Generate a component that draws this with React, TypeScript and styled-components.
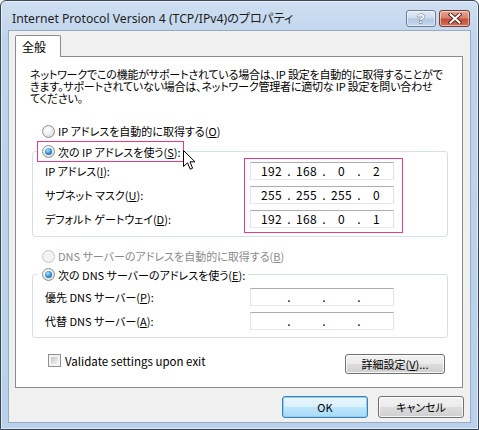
import React from 'react';
import styled, { createGlobalStyle } from 'styled-components';

const GlobalStyle = createGlobalStyle`
  html, body { margin: 0; padding: 0; background: #ffffff; }
  body { width: 479px; height: 430px; overflow: hidden; }
  * { box-sizing: border-box; }
`;

const UI_FONT = `"Noto Sans CJK JP", "Noto Sans", sans-serif`;

const Window = styled.div`
  position: relative;
  width: 479px;
  height: 430px;
  border: 1px solid #3b4654;
  border-radius: 6px 6px 0 0;
  background: linear-gradient(to bottom, #cfdff1 0px, #bed4ec 40px, #b9d1ea 100%);
  box-shadow: inset 0 0 0 1px rgba(255, 255, 255, 0.55);
  display: flex;
  flex-direction: column;
  font-family: ${UI_FONT};
  font-size: 11px;
  color: #000;
  font-feature-settings: "palt";
`;

const TitleBar = styled.div`
  height: 29px;
  display: flex;
  align-items: flex-start;
  padding: 9px 8px 0 11px;
`;

const TitleText = styled.div`
  flex: 1;
  font-family: "Noto Sans", "Noto Sans CJK JP", sans-serif;
  font-size: 12.2px;
  line-height: 18px;
  color: #1e1e1e;
  white-space: nowrap;
`;

const CaptionButtons = styled.div`
  display: flex;
  gap: 3px;
`;

const CaptionButton = styled.div<{ $close?: boolean }>`
  width: ${p => (p.$close ? 31 : 30)}px;
  height: 17px;
  border-radius: 3px;
  border: 1px solid ${p => (p.$close ? '#7a3a30' : '#6c7f97')};
  background: ${p =>
    p.$close
      ? 'linear-gradient(to bottom, #e8a493 0%, #d88373 45%, #c34f3a 55%, #d2705a 100%)'
      : 'linear-gradient(to bottom, #e3ecf6 0%, #cddcee 45%, #b3c8e2 55%, #c6d8ee 100%)'};
  box-shadow: inset 0 0 0 1px rgba(255, 255, 255, 0.5);
  display: flex;
  align-items: center;
  justify-content: center;
`;

const Client = styled.div`
  flex: 1;
  margin: 0 7px 6px 7px;
  background: #f0f0f0;
  border: 1px solid #97abc3;
  display: flex;
  flex-direction: column;
  padding: 4px 7px 0 6px;
`;

const TabStrip = styled.div`
  display: flex;
  position: relative;
  z-index: 1;
  margin-bottom: -1px;
`;

const Tab = styled.div`
  width: 46px;
  height: 22px;
  background: #ffffff;
  border: 1px solid #898c95;
  border-bottom: none;
  border-radius: 2px 2px 0 0;
  padding-left: 6px;
  font-size: 12px;
  line-height: 21px;
`;

const Panel = styled.div`
  height: 332px;
  background: #ffffff;
  border: 1px solid #898c95;
  display: flex;
  flex-direction: column;
`;

const Intro = styled.p`
  margin: 11px 10px 0 14px;
  line-height: 12px;
  font-size: 11px;
  white-space: nowrap;
  letter-spacing: -0.2px;
`;

const RadioRow = styled.div<{ $disabled?: boolean; $top: number }>`
  display: flex;
  align-items: center;
  gap: 3px;
  height: 16px;
  margin-top: ${p => p.$top}px;
  padding-left: 26px;
  color: ${p => (p.$disabled ? '#8a8a8a' : '#000')};
  white-space: nowrap;
`;

const Radio = styled.span<{ $checked?: boolean; $disabled?: boolean }>`
  position: relative;
  width: 13px;
  height: 13px;
  flex: none;
  border-radius: 50%;
  border: 1px solid ${p => (p.$disabled ? '#c4c4c4' : '#8e8f8f')};
  background: ${p =>
    p.$disabled
      ? '#f4f4f4'
      : 'radial-gradient(circle at 40% 35%, #ffffff 0%, #f1f1f1 40%, #cfcfcf 100%)'};
  &::after {
    content: '';
    display: ${p => (p.$checked ? 'block' : 'none')};
    position: absolute;
    left: 2px;
    top: 2px;
    width: 7px;
    height: 7px;
    border-radius: 50%;
    background: radial-gradient(circle at 40% 35%, #b8e3fb 0%, #3d9ad8 45%, #0e4f8e 100%);
  }
`;

const GroupBox = styled.fieldset<{ $top: number; $bottom: number }>`
  margin: ${p => p.$top}px 14px 0 16px;
  padding: 0 0 ${p => p.$bottom}px 12px;
  min-width: 0;
  border: 1px solid #d5dfe5;
  border-radius: 3px;
`;

const GroupLegend = styled.legend<{ $highlight?: boolean }>`
  display: flex;
  align-items: center;
  gap: 3px;
  height: 21px;
  margin-left: -8px;
  padding: 0 2px 0 4px;
  border: 1px solid ${p => (p.$highlight ? '#ea3a82' : 'transparent')};
  white-space: nowrap;
`;

const GroupBody = styled.div<{ $shift: number }>`
  display: flex;
  margin-top: ${p => p.$shift}px;
`;

const Labels = styled.div<{ $width: number }>`
  width: ${p => p.$width}px;
  display: flex;
  flex-direction: column;
  gap: 6px;
  padding-top: 4px;
`;

const FieldLabel = styled.div`
  height: 18px;
  line-height: 18px;
  white-space: nowrap;
`;

const InputsBox = styled.div<{ $highlight?: boolean }>`
  display: flex;
  flex-direction: column;
  gap: 6px;
  padding: 3px 8px 4px 5px;
  border: 1px solid ${p => (p.$highlight ? '#ea3a82' : 'transparent')};
`;

const IpField = styled.div`
  width: 144px;
  height: 18px;
  background: #ffffff;
  border: 1px solid #e2e3ea;
  border-top-color: #abadb3;
  border-bottom-color: #e3e9ef;
  display: grid;
  grid-template-columns: 29px 6px 29px 6px 29px 6px 29px;
  padding-left: 6px;
  align-items: center;
  font-size: 12px;
  line-height: 16px;
`;

const Octet = styled.span`
  text-align: center;
  letter-spacing: 0.3px;
`;

const Dot = styled.span`
  text-align: center;
`;

const BottomRow = styled.div`
  display: flex;
  align-items: flex-start;
  margin-top: 16px;
  padding: 0 17px 0 32px;
`;

const CheckLabel = styled.label`
  flex: 1;
  display: flex;
  align-items: center;
  gap: 4px;
  height: 13px;
  font-size: 11.5px;
`;

const CheckBox = styled.span`
  width: 13px;
  height: 13px;
  flex: none;
  border: 1px solid #8f8f8f;
  background-color: #f4f4f4;
  background-image: linear-gradient(135deg, #c4c4c4 0%, #f5f5f5 100%);
  background-size: 7px 7px;
  background-position: 2px 2px;
  background-repeat: no-repeat;
`;

const PushButton = styled.div<{ $default?: boolean; $width: number; $height: number }>`
  width: ${p => p.$width}px;
  height: ${p => p.$height}px;
  border-radius: 3px;
  border: 1px solid ${p => (p.$default ? '#3c7fb1' : '#707070')};
  background: ${p =>
    p.$default
      ? 'linear-gradient(to bottom, #eaf6fd 0%, #d9f0fc 49%, #bee6fd 50%, #a7d9f5 100%)'
      : 'linear-gradient(to bottom, #f2f2f2 0%, #ebebeb 49%, #dddddd 50%, #cfcfcf 100%)'};
  box-shadow: inset 0 0 0 1px ${p => (p.$default ? '#8ed0f4' : 'rgba(255,255,255,0.8)')};
  display: flex;
  align-items: center;
  justify-content: center;
  white-space: nowrap;
`;

const Footer = styled.div`
  display: flex;
  justify-content: flex-end;
  gap: 10px;
  padding-top: 8px;
  margin-right: -1px;
`;

const Key = styled.span`
  text-decoration: underline;
  text-underline-offset: 1px;
`;

const Cursor = styled.svg`
  position: absolute;
  left: 182px;
  top: 149px;
  pointer-events: none;
`;

export default function App() {
  return (
    <>
      <GlobalStyle />
      <Window>
        <TitleBar>
          <TitleText>Internet Protocol Version 4 (TCP/IPv4)のプロパティ</TitleText>
          <CaptionButtons>
            <CaptionButton>
              <svg width="12" height="13" viewBox="0 0 12 13">
                <text x="6" y="11" textAnchor="middle" fontFamily="Liberation Sans, sans-serif" fontWeight="bold" fontSize="13" fill="#ffffff" stroke="#4b5d75" strokeWidth="0.8" paintOrder="stroke">?</text>
              </svg>
            </CaptionButton>
            <CaptionButton $close>
              <svg width="14" height="11" viewBox="0 0 14 11">
                <path d="M2.5 1.5 L11.5 9.5 M11.5 1.5 L2.5 9.5" stroke="#5a2a22" strokeWidth="4" strokeLinecap="square" />
                <path d="M2.5 1.5 L11.5 9.5 M11.5 1.5 L2.5 9.5" stroke="#ffffff" strokeWidth="2" strokeLinecap="square" />
              </svg>
            </CaptionButton>
          </CaptionButtons>
        </TitleBar>
        <Client>
          <TabStrip>
            <Tab>全般</Tab>
          </TabStrip>
          <Panel>
            <Intro>
              ネットワークでこの機能がサポートされている場合は、IP 設定を自動的に取得することがで
              <br />
              きます。サポートされていない場合は、ネットワーク管理者に適切な IP 設定を問い合わせ
              <br />
              てください。
            </Intro>
            <RadioRow $top={19}>
              <Radio />
              <span>IP アドレスを自動的に取得する(<Key>O</Key>)</span>
            </RadioRow>
            <GroupBox $top={2} $bottom={3}>
              <GroupLegend $highlight>
                <Radio $checked />
                <span>次の IP アドレスを使う(<Key>S</Key>):</span>
              </GroupLegend>
              <GroupBody $shift={-4}>
                <Labels $width={199}>
                  <FieldLabel>IP アドレス(<Key>I</Key>):</FieldLabel>
                  <FieldLabel>サブネット マスク(<Key>U</Key>):</FieldLabel>
                  <FieldLabel>デフォルト ゲートウェイ(<Key>D</Key>):</FieldLabel>
                </Labels>
                <InputsBox $highlight>
                  {[
                    ['192', '168', '0', '2'],
                    ['255', '255', '255', '0'],
                    ['192', '168', '0', '1'],
                  ].map((ip, i) => (
                    <IpField key={i}>
                      <Octet>{ip[0]}</Octet>
                      <Dot>.</Dot>
                      <Octet>{ip[1]}</Octet>
                      <Dot>.</Dot>
                      <Octet>{ip[2]}</Octet>
                      <Dot>.</Dot>
                      <Octet>{ip[3]}</Octet>
                    </IpField>
                  ))}
                </InputsBox>
              </GroupBody>
            </GroupBox>
            <RadioRow $top={11} $disabled>
              <Radio $disabled />
              <span>DNS サーバーのアドレスを自動的に取得する(<Key>B</Key>)</span>
            </RadioRow>
            <GroupBox $top={0} $bottom={2}>
              <GroupLegend>
                <Radio $checked />
                <span>次の DNS サーバーのアドレスを使う(<Key>E</Key>):</span>
              </GroupLegend>
              <GroupBody $shift={-1}>
                <Labels $width={199}>
                  <FieldLabel>優先 DNS サーバー(<Key>P</Key>):</FieldLabel>
                  <FieldLabel>代替 DNS サーバー(<Key>A</Key>):</FieldLabel>
                </Labels>
                <InputsBox>
                  {[0, 1].map(i => (
                    <IpField key={i}>
                      <Octet />
                      <Dot>.</Dot>
                      <Octet />
                      <Dot>.</Dot>
                      <Octet />
                      <Dot>.</Dot>
                      <Octet />
                    </IpField>
                  ))}
                </InputsBox>
              </GroupBody>
            </GroupBox>
            <BottomRow>
              <CheckLabel>
                <CheckBox />
                <span>Validate settings upon exit</span>
              </CheckLabel>
              <PushButton $width={100} $height={20}>
                詳細設定(<Key>V</Key>)...
              </PushButton>
            </BottomRow>
          </Panel>
          <Footer>
            <PushButton $default $width={86} $height={22}>OK</PushButton>
            <PushButton $width={86} $height={22}>キャンセル</PushButton>
          </Footer>
        </Client>
        <Cursor width="13" height="21" viewBox="0 0 13 21">
          <path d="M0.5 0.5 L0.5 16.5 L4.5 12.8 L7.2 19.2 L9.6 18.2 L7 11.8 L12 11.8 Z" fill="#ffffff" stroke="#000000" strokeWidth="1" strokeLinejoin="miter" />
        </Cursor>
      </Window>
    </>
  );
}
